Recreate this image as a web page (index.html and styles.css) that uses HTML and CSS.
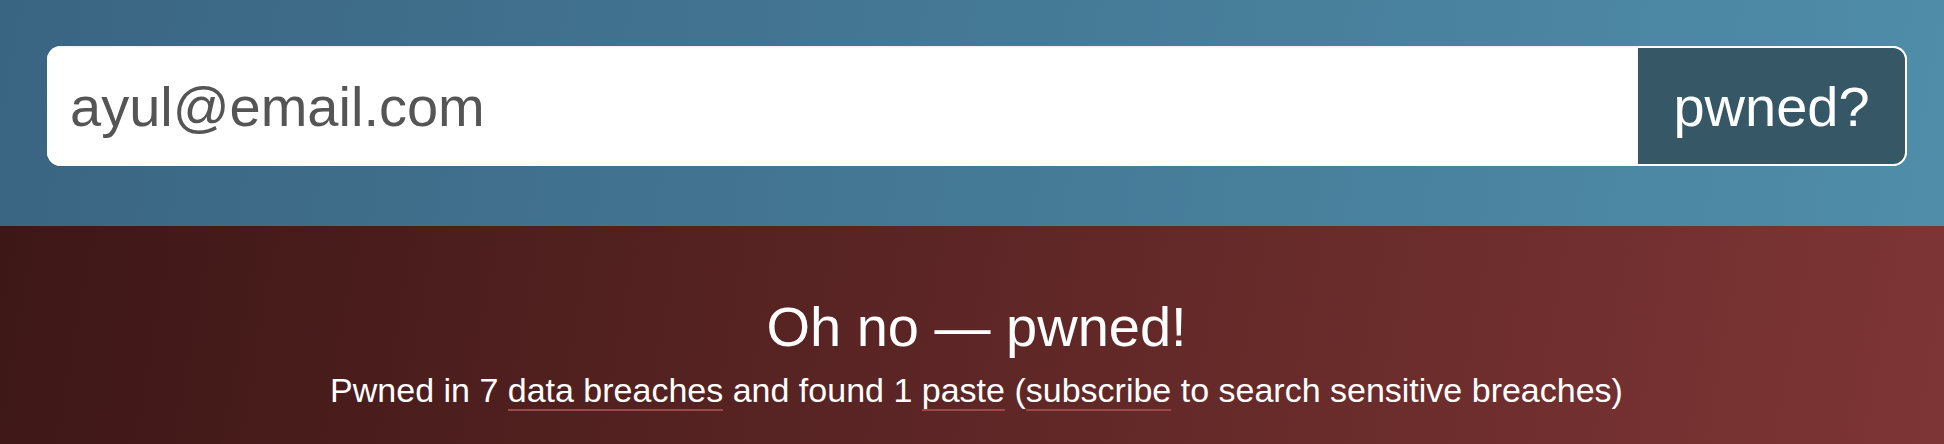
FILE: index.html
```html
<!DOCTYPE html>
<html lang="en">
<head>
<meta charset="utf-8">
<title>pwned?</title>
<link rel="stylesheet" href="styles.css">
</head>
<body>
<header class="search">
  <form class="search-form">
    <input class="search-input" type="text" value="ayul@email.com" aria-label="Email address">
    <button class="search-button" type="button">pwned?</button>
  </form>
</header>
<section class="result">
  <h1 class="result-title">Oh no — pwned!</h1>
  <p class="result-text">Pwned in 7 <a class="result-link" href="#">data breaches</a> and found 1 <a class="result-link" href="#">paste</a> (<a class="result-link" href="#">subscribe</a> to search sensitive breaches)</p>
</section>
</body>
</html>
```
FILE: styles.css
```css
html, body {
  margin: 0;
  padding: 0;
}
body {
  width: 1944px;
  height: 444px;
  overflow: hidden;
  font-family: "Helvetica Neue", Helvetica, "Liberation Sans", Arial, sans-serif;
}
.search {
  height: 226px;
  box-sizing: border-box;
  padding: 46px 37px 0 47px;
  background: linear-gradient(100deg, #3a6582 0%, #4f8da9 100%);
}
.search-form {
  display: flex;
  height: 120px;
  margin: 0;
  background: #fff;
  border-radius: 14px;
  overflow: hidden;
}
.search-input {
  flex: 1;
  min-width: 0;
  height: 120px;
  box-sizing: border-box;
  border: 0;
  outline: none;
  margin: 0;
  padding: 0 0 0 23px;
  background: #fff;
  box-shadow: inset 0 1px 2px rgba(0, 0, 0, 0.08);
  font-family: inherit;
  font-size: 56px;
  color: #555;
}
.search-button {
  width: 269px;
  height: 120px;
  box-sizing: border-box;
  margin: 0;
  padding: 0;
  border: 2px solid #fff;
  border-left: 0;
  border-radius: 0 14px 14px 0;
  background: #365766;
  color: #fff;
  font-family: inherit;
  font-size: 56px;
  cursor: pointer;
}
.result {
  height: 218px;
  box-sizing: border-box;
  padding: 69px 0 0 9px;
  display: flex;
  flex-direction: column;
  align-items: center;
  gap: 11px;
  background: linear-gradient(100deg, #3d1716 0%, #7e3535 100%);
  color: #fff;
}
.result-title {
  margin: 0;
  font-size: 56px;
  line-height: 64px;
  font-weight: 400;
}
.result-text {
  margin: 0;
  font-size: 34px;
  line-height: 40px;
}
.result-link {
  color: #fff;
  text-decoration: none;
  border-bottom: 2px solid #9e4747;
}
```
